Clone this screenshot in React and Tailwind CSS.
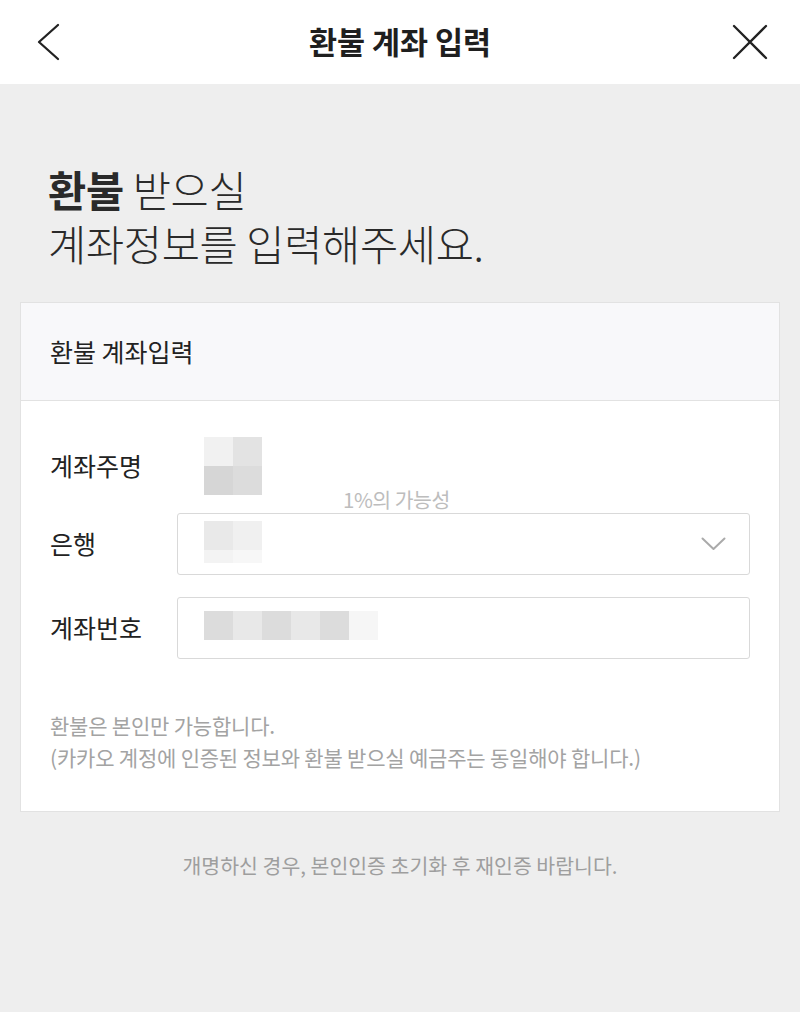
const FONT = { fontFamily: '"Noto Sans CJK KR", "Noto Sans", sans-serif' };

function Mosaic({ cells, size = 29, heights }) {
  return (
    <div className="flex flex-col">
      {cells.map((row, r) => (
        <div key={r} className="flex">
          {row.map((c, i) => (
            <div key={i} style={{ width: size, height: heights ? heights[r] : size, background: c }} />
          ))}
        </div>
      ))}
    </div>
  );
}

function Row({ label, children }) {
  return (
    <div className="flex items-center">
      <div className="w-[127px] shrink-0 text-[25px] text-[#222]">{label}</div>
      {children}
    </div>
  );
}

export default function App() {
  return (
    <div className="w-[800px] min-h-[1012px] bg-[#eeeeee]" style={FONT}>
      {/* header */}
      <div className="h-[84px] bg-white grid grid-cols-[100px_1fr_100px] items-center">
        <button className="pl-[36px] flex items-center">
          <svg width="26" height="40" viewBox="0 0 26 40" fill="none">
            <polyline points="22,3 3,20 22,37" stroke="#222" strokeWidth="2.3" strokeLinecap="round" strokeLinejoin="round" />
          </svg>
        </button>
        <h1 className="text-center text-[30.5px] font-bold text-[#1f1f1f]">환불 계좌 입력</h1>
        <button className="flex justify-end pr-[32px]">
          <svg width="36" height="36" viewBox="0 0 36 36" fill="none">
            <path d="M2 2L34 34M34 2L2 34" stroke="#222" strokeWidth="2.3" strokeLinecap="round" />
          </svg>
        </button>
      </div>

      {/* headline */}
      <div className="pt-[78px] px-[48px] text-[41.5px] leading-[54px] font-light text-[#2a2a2a] tracking-[-0.3px]">
        <p><span className="font-bold">환불</span> 받으실</p>
        <p>계좌정보를 입력해주세요.</p>
      </div>

      {/* card */}
      <div className="relative mx-[20px] mt-[32px] border border-[#e2e2e2] bg-white">
        <div className="h-[98px] flex items-center px-[29px] bg-[#f8f8fa] border-b border-[#e2e2e2] text-[25px] text-[#222]">
          환불 계좌입력
        </div>

        <div className="px-[29px] pt-[34px] pb-[38px]">
          <Row label="계좌주명">
            <div className="h-[62px] flex items-center pl-[27px]">
              <Mosaic cells={[["#f1f1f1", "#e3e3e3"], ["#d6d6d6", "#dcdcdc"]]} />
            </div>
          </Row>

          <div className="mt-[16px]">
            <Row label="은행">
              <div className="flex-1 h-[62px] border border-[#d9d9d9] rounded-[3px] flex items-center justify-between pl-[26px] pr-[23px]">
                <div className="mt-[-4px]">
                  <Mosaic heights={[29, 13]} cells={[["#e9e9e9", "#f0f0f0"], ["#f3f3f3", "#f7f7f7"]]} />
                </div>
                <svg width="25" height="14" viewBox="0 0 25 14" fill="none">
                  <polyline points="1.5,1.5 12.5,12 23.5,1.5" stroke="#aaa" strokeWidth="2" strokeLinecap="round" strokeLinejoin="round" />
                </svg>
              </div>
            </Row>
          </div>

          <div className="mt-[22px]">
            <Row label="계좌번호">
              <div className="flex-1 h-[62px] border border-[#d9d9d9] rounded-[3px] flex items-center pl-[26px]">
                <div className="mt-[-6px]">
                  <Mosaic cells={[["#dcdcdc", "#e8e8e8", "#dcdcdc", "#e8e8e8", "#dcdcdc", "#f6f6f6"]]} />
                </div>
              </div>
            </Row>
          </div>

          <div className="mt-[50px] text-[21px] leading-[32px] text-[#a3a3a3] tracking-[-0.2px]">
            <p>환불은 본인만 가능합니다.</p>
            <p>(카카오 계정에 인증된 정보와 환불 받으실 예금주는 동일해야 합니다.)</p>
          </div>
        </div>

        {/* watermark */}
        <div className="absolute left-[322px] top-[181px] text-[20.5px] text-[#bdbdbd] tracking-[-0.5px]">1%의 가능성</div>
      </div>

      <p className="mt-[38px] text-center text-[20.5px] text-[#9e9e9e]">
        개명하신 경우, 본인인증 초기화 후 재인증 바랍니다.
      </p>
    </div>
  );
}
